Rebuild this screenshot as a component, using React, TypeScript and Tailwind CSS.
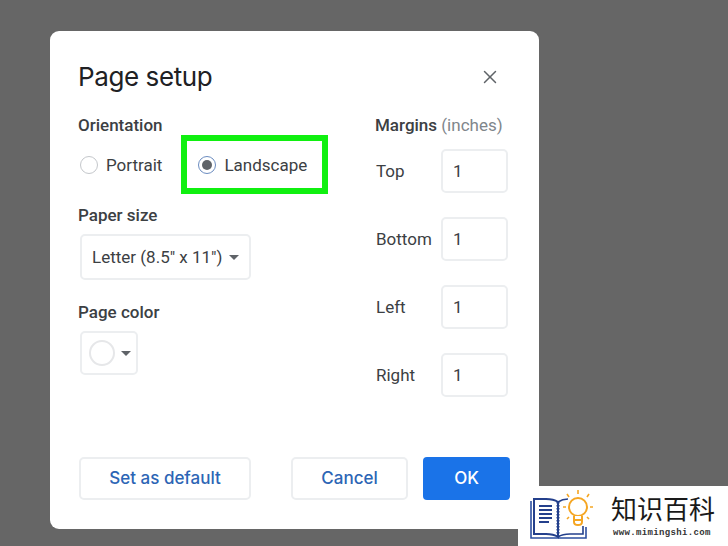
import { X } from 'lucide-react'

const MARGINS = ['Top', 'Bottom', 'Left', 'Right']

function Caret({ className = '' }: { className?: string }) {
  return <span className={`block w-0 h-0 border-x-[5px] border-x-transparent border-t-[5px] border-t-[#5f6368] ${className}`} />
}

function Logo() {
  return (
    <svg width="66" height="52" viewBox="0 0 66 52" fill="none">
      {/* open book */}
      <path d="M1 12v37h27M56 38v11H28" stroke="#2d4fa0" strokeWidth="1.6" />
      <path d="M4 10v35h12c5 0 9 1 12 3V13c-3-2-7-3-12-3H4z" stroke="#24408c" strokeWidth="2" fill="#fff" />
      <path d="M28 13c3-2 6-3 10-3M28 48c3-2 8-3 12-3h13v-8" stroke="#24408c" strokeWidth="1.6" />
      <path d="M9 17h13M9 21h13M9 25h13M9 29h13M9 33h10" stroke="#24408c" strokeWidth="1.8" />
      <path d="M28 13v35" stroke="#24408c" strokeWidth="3" strokeDasharray="1.5 1.5" />
      {/* bulb */}
      <circle cx="48" cy="18" r="9" stroke="#f5a623" strokeWidth="2" fill="#fff" />
      <path d="M44 27v6c0 2 1 3 4 3s4-1 4-3v-6M44 31h8" stroke="#f5a623" strokeWidth="2" fill="#fff" />
      <path d="M48 1v4M37 5l2 3M59 5l-2 3M33 18h3M63 18h-3M37 30l2-2M59 30l-2-2" stroke="#f5a623" strokeWidth="1.6" />
    </svg>
  )
}

export default function App() {
  return (
    <div className="relative w-[728px] h-[546px] overflow-hidden bg-[#666666] pt-[31px] pl-[50px] font-['Roboto',sans-serif]">
      <div className="w-[489px] h-[498px] bg-white rounded-[9px] pl-[28px] pr-[29px] flex flex-col">
        <div className="h-[84px] shrink-0 pt-[26px] flex justify-between items-start">
          <h1 className="text-[26px] leading-[40px] text-[#202124] font-['Inter',sans-serif] tracking-[-0.4px]">Page setup</h1>
          <X size={22} strokeWidth={1.6} className="text-[#5f6368] mt-[9px] mr-[9px]" />
        </div>

        <div className="flex h-[280px] shrink-0">
          <div className="w-[297px] shrink-0">
            <div className="text-[17px] leading-[20px] font-medium text-[#3c4043]">Orientation</div>
            <div className="flex items-center h-[59px] mt-0">
              <span className="ml-[2px] w-[18px] h-[18px] rounded-full border border-[#c4c7cb]" />
              <span className="ml-[8px] pt-[2px] text-[17px] text-[#3c4043]">Portrait</span>
              <div className="ml-[19px] w-[147px] h-[59px] border-[6px] border-[#10f010] flex items-center pl-[11px]">
                <span className="w-[18px] h-[18px] rounded-full border border-[#6b8cc0] flex items-center justify-center">
                  <span className="w-[10px] h-[10px] rounded-full bg-[#5f6368]" />
                </span>
                <span className="ml-[8px] pt-[2px] text-[17px] text-[#3c4043]">Landscape</span>
              </div>
            </div>
            <div className="mt-[11px] text-[17px] leading-[20px] font-medium text-[#3c4043]">Paper size</div>
            <div className="mt-[9px] ml-[2px] w-[171px] h-[46px] border-2 border-[#eceef0] rounded-[5px] flex items-center pl-[10px]">
              <span className="pt-[2px] text-[17px] text-[#3c4043] whitespace-nowrap">Letter (8.5" x 11")</span>
              <Caret className="ml-[7px]" />
            </div>
            <div className="mt-[22px] text-[17px] leading-[20px] font-medium text-[#3c4043]">Page color</div>
            <div className="mt-[9px] ml-[2px] w-[58px] h-[44px] border-2 border-[#eceef0] rounded-[5px] flex items-center pl-[7px]">
              <span className="w-[26px] h-[26px] rounded-full border-2 border-[#e6e7e9]" />
              <Caret className="ml-[6px]" />
            </div>
          </div>

          <div className="flex-1">
            <div className="text-[17px] leading-[20px] font-medium text-[#3c4043] whitespace-nowrap">
              Margins <span className="font-normal text-[#80868b]">(inches)</span>
            </div>
            <div className="mt-[14px] flex flex-col gap-[24px]">
              {MARGINS.map((m) => (
                <div key={m} className="flex items-center h-[44px]">
                  <span className="w-[66px] pl-[1px] pt-[2px] text-[17px] text-[#3c4043]">{m}</span>
                  <div className="w-[67px] h-[44px] border-2 border-[#eceef0] rounded-[5px] flex items-center pl-[10px] pt-[2px] text-[17px] text-[#3c4043]">1</div>
                </div>
              ))}
            </div>
          </div>
        </div>

        <div className="mt-[62px] ml-[1px] flex h-[43px] font-['Inter',sans-serif] text-[17px] font-medium">
          <div className="w-[172px] border-2 border-[#eceef0] rounded-[5px] flex items-center justify-center text-[#2c65b5]">Set as default</div>
          <div className="ml-[40px] w-[117px] border-2 border-[#eceef0] rounded-[5px] flex items-center justify-center text-[#2c65b5]">Cancel</div>
          <div className="ml-[15px] w-[87px] bg-[#1a73e8] rounded-[4px] flex items-center justify-center text-white">OK</div>
        </div>
      </div>

      {/* watermark */}
      <div className="absolute right-0 bottom-0 w-[210px] h-[60px] bg-white flex items-start pl-[12px] pt-[3px]">
        <Logo />
        <div className="ml-[15px] flex flex-col">
          <span className="text-[26px] leading-[32px] mt-[3px] text-[#1a1a1a] font-['Noto_Sans_CJK_SC',sans-serif] whitespace-nowrap">知识百科</span>
          <span className="text-[9px] leading-[11px] mt-[4px] ml-[2px] font-bold text-[#333333] font-['Liberation_Mono',monospace] whitespace-nowrap tracking-[0.35px]">www.mimingshi.com</span>
        </div>
      </div>
    </div>
  )
}
